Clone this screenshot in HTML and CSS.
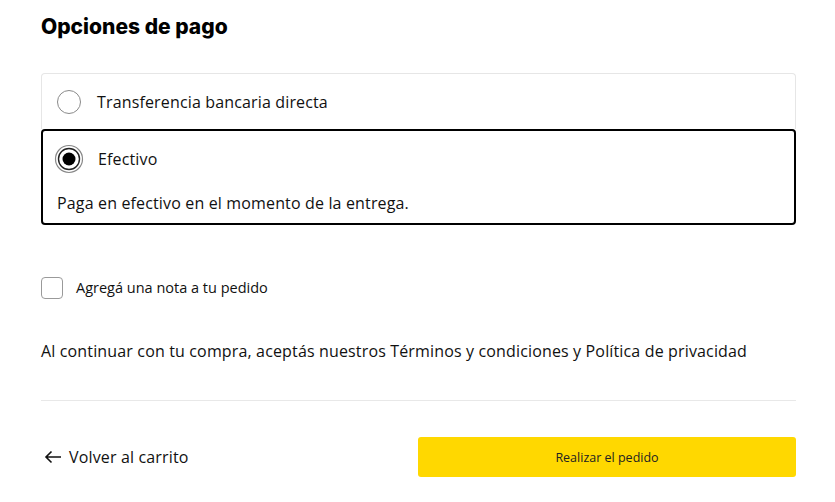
FILE: index.html
```html
<!DOCTYPE html>
<html lang="es">
<head>
<meta charset="utf-8">
<link rel="stylesheet" href="styles.css">
</head>
<body>
<div class="page">
  <h2 class="title">Opciones de pago</h2>
  <div class="options">
    <div class="option">
      <div class="option-row">
        <span class="radio"></span>
        <span class="option-label">Transferencia bancaria directa</span>
      </div>
    </div>
    <div class="option selected">
      <div class="option-row">
        <svg class="radio-on" width="30" height="30" viewBox="0 0 30 30">
          <circle cx="15" cy="15" r="13.5" fill="none" stroke="#888" stroke-width="1.2"/>
          <circle cx="15" cy="15" r="10.5" fill="#fff" stroke="#222" stroke-width="1.4"/>
          <circle cx="15" cy="15" r="6.5" fill="#000"/>
        </svg>
        <span class="option-label">Efectivo</span>
      </div>
      <p class="option-desc">Paga en efectivo en el momento de la entrega.</p>
    </div>
  </div>
  <label class="note">
    <span class="checkbox"></span>
    <span>Agregá una nota a tu pedido</span>
  </label>
  <p class="terms">Al continuar con tu compra, aceptás nuestros Términos y condiciones y Política de privacidad</p>
  <div class="actions">
    <a class="back" href="#">
      <svg width="18" height="14" viewBox="0 0 18 14"><path d="M17 7H2M7.5 1.5L2 7l5.5 5.5" fill="none" stroke="#111" stroke-width="1.6"/></svg>
      <span>Volver al carrito</span>
    </a>
    <button class="submit">Realizar el pedido</button>
  </div>
</div>
</body>
</html>
```
FILE: styles.css
```css
* { box-sizing: border-box; }
html, body { margin: 0; padding: 0; background: #fff; }
body { font-family: "Open Sans", "Liberation Sans", sans-serif; color: #111; }
.page { width: 755px; margin-left: 41px; padding-top: 13px; }
.title {
  font-family: "Inter", "DejaVu Sans", sans-serif;
  font-weight: 800;
  font-size: 21px;
  line-height: 28px;
  margin: 0 0 32px 0;
  letter-spacing: 0;
  color: #000;
}
.options { display: flex; flex-direction: column; }
.option {
  border: 1px solid #e6e6e6;
  border-radius: 4px 4px 0 0;
  border-bottom: none;
  height: 56px;
  padding: 0 0 0 15px;
}
.option-row { display: flex; align-items: center; height: 56px; gap: 17px; }
.option:first-child .option-row { gap: 16px; height: 55px; }
.option-label { font-size: 16px; line-height: 22px; letter-spacing: 0.15px; }
.radio {
  width: 24px; height: 24px;
  border: 1px solid #8a8a8a;
  border-radius: 50%;
  display: inline-block;
}
.option.selected {
  border: 2px solid #000;
  border-radius: 4px;
  height: 96px;
  padding: 0 0 0 11px;
}
.option.selected .option-row { height: 55px; gap: 14px; }
.radio-on { display: block; }
.option-desc { margin: 0; padding-left: 3px; font-size: 16px; line-height: 22px; letter-spacing: 0.15px; padding-top: 6px; }
.note {
  display: flex; align-items: center; gap: 13px;
  margin-top: 52px;
  font-size: 14.5px;
  line-height: 22px;
  color: #111;
}
.checkbox {
  width: 22px; height: 22px;
  border: 1px solid #9a9a9a;
  border-radius: 4px;
  display: inline-block;
}
.terms { margin: 41px 0 0 0; font-size: 16px; line-height: 22px; letter-spacing: 0.15px; padding-bottom: 38px; border-bottom: 1px solid #e8e8e8; }
.actions { display: flex; justify-content: space-between; align-items: center; margin-top: 36px; }
.back { display: flex; align-items: center; gap: 7px; color: #111; text-decoration: none; font-size: 16px; letter-spacing: 0.15px; padding-left: 3px; }
.back svg { display: block; }
.submit {
  width: 378px; height: 40px;
  background: #ffd800;
  border: none;
  border-radius: 3px;
  font-family: "Open Sans", "Liberation Sans", sans-serif;
  font-size: 12.5px;
  color: #222;
}
```
